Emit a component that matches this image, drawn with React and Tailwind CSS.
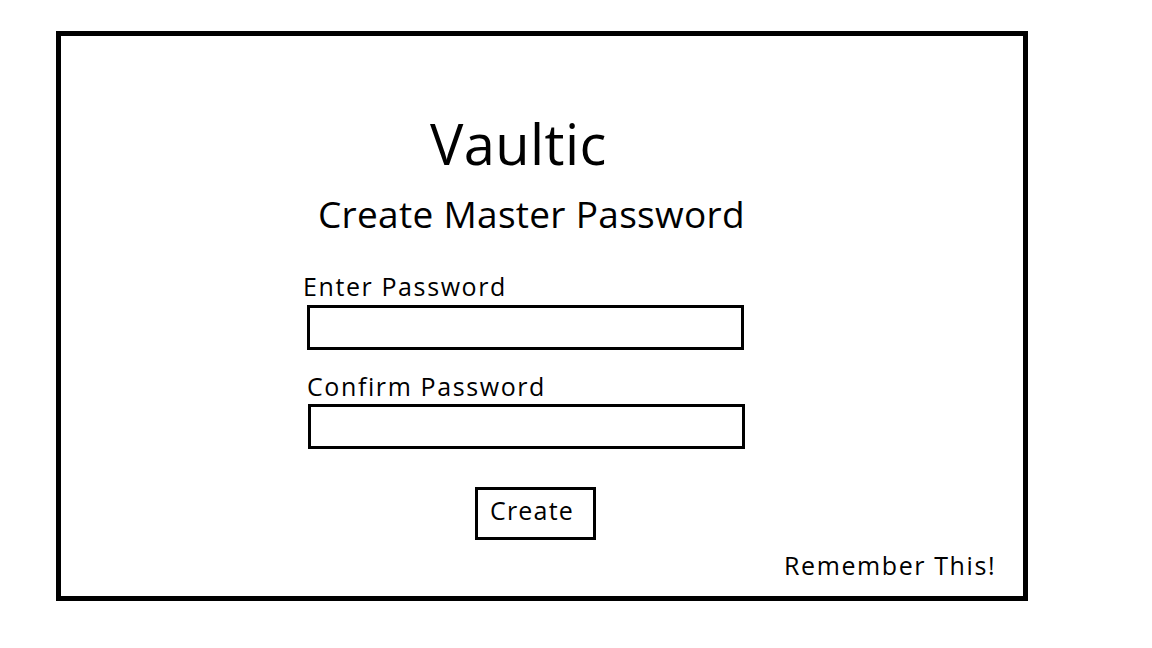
export default function App() {
  return (
    <div className="w-[1152px] h-[648px] bg-white pt-[31px] pl-[56px] text-black" style={{ fontFamily: '"Open Sans", sans-serif' }}>
      <div className="w-[972px] h-[570px] border-[5px] border-black">
        <div className="ml-[369px] mt-[79px] text-[56px] leading-none tracking-[0.4px]">Vaultic</div>
        <div className="ml-[257px] mt-[24px] text-[37px] leading-none tracking-[0.3px]">Create Master Password</div>
        <div className="ml-[242px] mt-[42px] text-[25px] leading-none tracking-[1.6px]">Enter Password</div>
        <div className="ml-[246px] mt-[6px] w-[437px] h-[45px] border-[3px] border-black"></div>
        <div className="ml-[246px] mt-[24px] text-[25px] leading-none tracking-[1.6px]">Confirm Password</div>
        <div className="ml-[247px] mt-[5px] w-[437px] h-[45px] border-[3px] border-black"></div>
        <div className="ml-[414px] mt-[38px] w-[121px] h-[53px] border-[3px] border-black flex items-center pl-[12px] pb-[7px] text-[25px] leading-none tracking-[1.2px]">Create</div>
        <div className="ml-[723px] mt-[13px] text-[25px] leading-none tracking-[1.6px]">Remember This!</div>
      </div>
    </div>
  );
}
